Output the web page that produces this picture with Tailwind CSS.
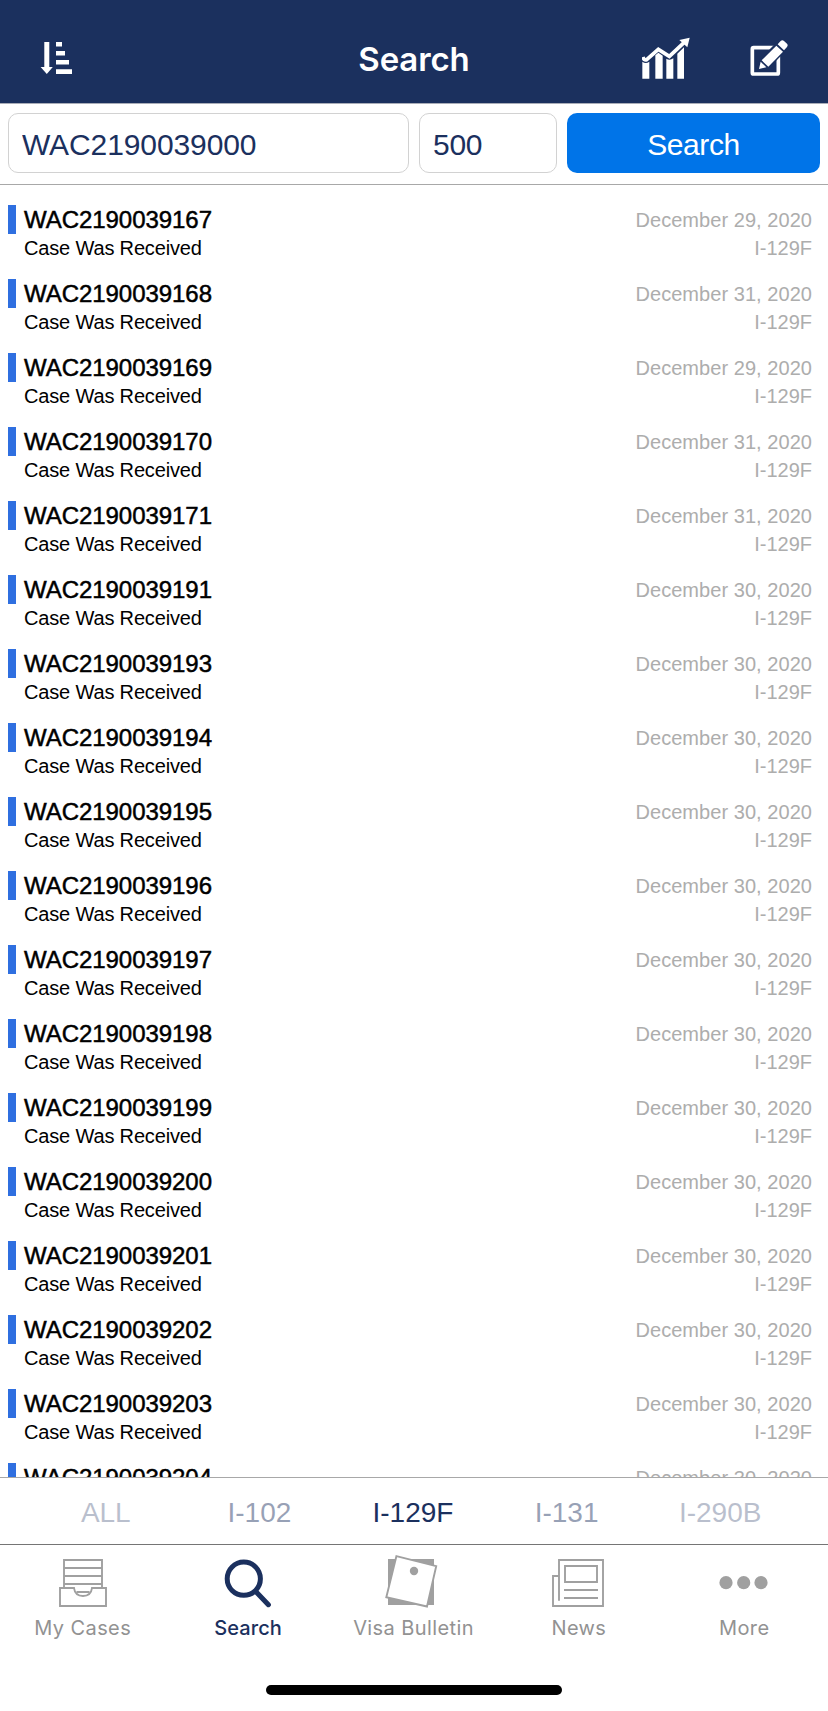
<!DOCTYPE html>
<html lang="en">
<head>
  <meta charset="UTF-8">
  <meta name="viewport" content="width=device-width, initial-scale=1.0">
  <title>Search</title>
  <script src="https://cdn.jsdelivr.net/npm/@tailwindcss/browser@4"></script>
</head>
<body class="bg-white font-['Liberation_Sans',Arial,sans-serif]">
<div class="flex flex-col w-[828px] h-[1711px] overflow-hidden">
  <header class="grid grid-cols-3 items-center h-[104px] shrink-0 pt-[13px] px-10 bg-[#1b305e] border-b border-[#a9adb8] text-white">
    <svg class="w-8 h-8" viewBox="0 0 32 32" fill="currentColor">
      <path d="M4.3 0h5v25h3.5L6.8 32 .6 25h3.7z"/>
      <path d="M16 0h6v4.4h-6zM16 9h9v4.5h-9zM16 18h13v4.6H16zM16 27.3h16V32H16z"/>
    </svg>
    <h1 class="pt-[2px] text-center text-[33px] leading-10 font-semibold tracking-[-0.1px] font-['Inter',sans-serif]">Search</h1>
    <div class="flex justify-end items-center gap-[60px]">
      <svg class="w-12 h-[42px] shrink-0" viewBox="36 36 144 126" fill="currentColor">
        <path d="M37 110q10 8 21 0v51H37zM76 91l9-8 13 9v69H76zM109 101q10 7 21-1v61h-21zM142 86l20-19v94h-20z"/>
        <path d="M39 96q3 11 11 8l35-31 33 21 44-41" fill="none" stroke="currentColor" stroke-width="11"/>
        <path d="M179 38l-31 7 24 22z"/>
      </svg>
      <svg class="w-[38px] h-[38px] shrink-0" viewBox="360 42 114 114" fill="none">
        <rect x="367" y="68" width="78" height="79" rx="4" stroke="currentColor" stroke-width="11"/>
        <path d="M381 139l7-34 61-63 28 26-62 63z" fill="#1b305e"/>
        <path d="M387 132l5-22 17 17zM395 106l44-44 20 18-44 45zM443 58l9-10q5-5 10 0l9 8q4 5 0 10l-9 10z" fill="currentColor"/>
      </svg>
    </div>
  </header>

  <form id="searchForm" class="flex h-[81px] shrink-0 pt-[9px] pl-2 pr-2 pb-3 gap-[10px] border-b border-[#a8a8a8] text-[30px]">
    <input type="text" value="WAC2190039000" class="w-[401px] h-[60px] pt-[3px] px-[13px] border border-[#d2d2d2] rounded-[10px] text-[#1b305e] tracking-[-0.1px]">
    <input type="text" value="500" class="w-[138px] h-[60px] pt-[3px] px-[13px] border border-[#d2d2d2] rounded-[10px] text-[#1b305e] tracking-[-0.3px]">
    <button type="submit" class="w-[253px] h-[60px] pt-[2px] rounded-[10px] bg-[#0074e8] text-white tracking-[-0.4px]">Search</button>
  </form>

  <main id="cases" class="h-[1292px] shrink-0 overflow-hidden pt-5 pl-2 pr-4"></main>

  <nav class="grid grid-cols-5 items-center h-[68px] shrink-0 pl-[29px] pr-[31px] pt-[3px] border-y border-t-[#a8a8a8] border-b-[#757575] text-center text-[28px] text-[#1b305e]">
    <a class="opacity-30">ALL</a>
    <a class="opacity-45">I-102</a>
    <a>I-129F</a>
    <a class="opacity-45">I-131</a>
    <a class="opacity-30">I-290B</a>
  </nav>

  <footer class="grid grid-cols-5 pt-[9px] pr-px text-center text-[20px] leading-6 tracking-[0.4px] text-[#929292] font-['Inter',sans-serif]">
    <a class="flex flex-col items-center gap-2">
      <svg class="w-[54px] h-[54px] overflow-visible" viewBox="0 0 54 54" fill="none" stroke="#a0a0a0" stroke-width="1.9">
        <path d="M8 34V6h38v28M8 14h38M8 22h38M8 30h38M20.5 38h13"/>
        <path d="M4 34h14q1 8 9 8t9-8h14v18H4z"/>
      </svg>
      <span>My Cases</span>
    </a>
    <a class="flex flex-col items-center gap-2 text-[#1b305e]">
      <svg class="w-[54px] h-[54px] overflow-visible" viewBox="0 0 54 54" fill="none" stroke="currentColor" stroke-width="5" stroke-linecap="round">
        <circle cx="22.8" cy="24.7" r="16.6"/>
        <path d="M35 37.7l12.4 13"/>
      </svg>
      <span class="font-medium tracking-[0.1px]">Search</span>
    </a>
    <a class="flex flex-col items-center gap-2">
      <svg class="w-[54px] h-[54px] overflow-visible" viewBox="0 0 54 54" fill="#a0a0a0">
        <path d="M2 5h46v46H2z"/>
        <path d="M10.4 2.2l39.8 9.9L41 52.5.3 43.2z" fill="#fff" stroke="#a0a0a0" stroke-width="1.9"/>
        <circle cx="28" cy="17" r="4.2"/>
      </svg>
      <span>Visa Bulletin</span>
    </a>
    <a class="flex flex-col items-center gap-2">
      <svg class="w-[54px] h-[54px] overflow-visible" viewBox="0 0 54 54" fill="none" stroke="#a0a0a0" stroke-width="1.9">
        <path d="M7 46.7V6h44v46H1V22h6M13 12h32v16H13zM12 36h34M12 44h34"/>
      </svg>
      <span>News</span>
    </a>
    <a class="flex flex-col items-center gap-2">
      <svg class="w-[54px] h-[54px] overflow-visible" viewBox="0 0 54 54" fill="#a0a0a0">
        <circle cx="9" cy="28.7" r="6.6"/>
        <circle cx="26.7" cy="28.7" r="6.6"/>
        <circle cx="44" cy="28.7" r="6.6"/>
      </svg>
      <span>More</span>
    </a>
  </footer>

  <div class="w-[296px] h-[10px] shrink-0 mt-auto mb-4 mx-auto rounded-full bg-black"></div>
</div>

<script>
  // last three digits of the receipt number, day in December 2020
  const cases = [
    [167, 29], [168, 31], [169, 29], [170, 31], [171, 31], [191, 30],
    [193, 30], [194, 30], [195, 30], [196, 30], [197, 30], [198, 30],
    [199, 30], [200, 30], [201, 30], [202, 30], [203, 30], [204, 30]
  ];

  document.getElementById('cases').innerHTML = cases.map(([num, day]) => `
    <div class="flex h-[74px]">
      <div class="w-2 h-[29px] bg-[#2f6fe0]"></div>
      <div class="flex-1 pl-2 text-black">
        <p class="text-[24px] leading-[29px] tracking-[-0.05px] [-webkit-text-stroke:0.5px]">WAC2190039${num}</p>
        <p class="text-[20px] leading-[28px] tracking-[-0.16px]">Case Was Received</p>
      </div>
      <div class="text-right text-[20px] text-[#adadad]">
        <p class="leading-[30px] tracking-[0.05px]">December ${day}, 2020</p>
        <p class="leading-[26px]">I-129F</p>
      </div>
    </div>`).join('');

  document.getElementById('searchForm').addEventListener('submit', e => e.preventDefault());
</script>
</body>
</html>
